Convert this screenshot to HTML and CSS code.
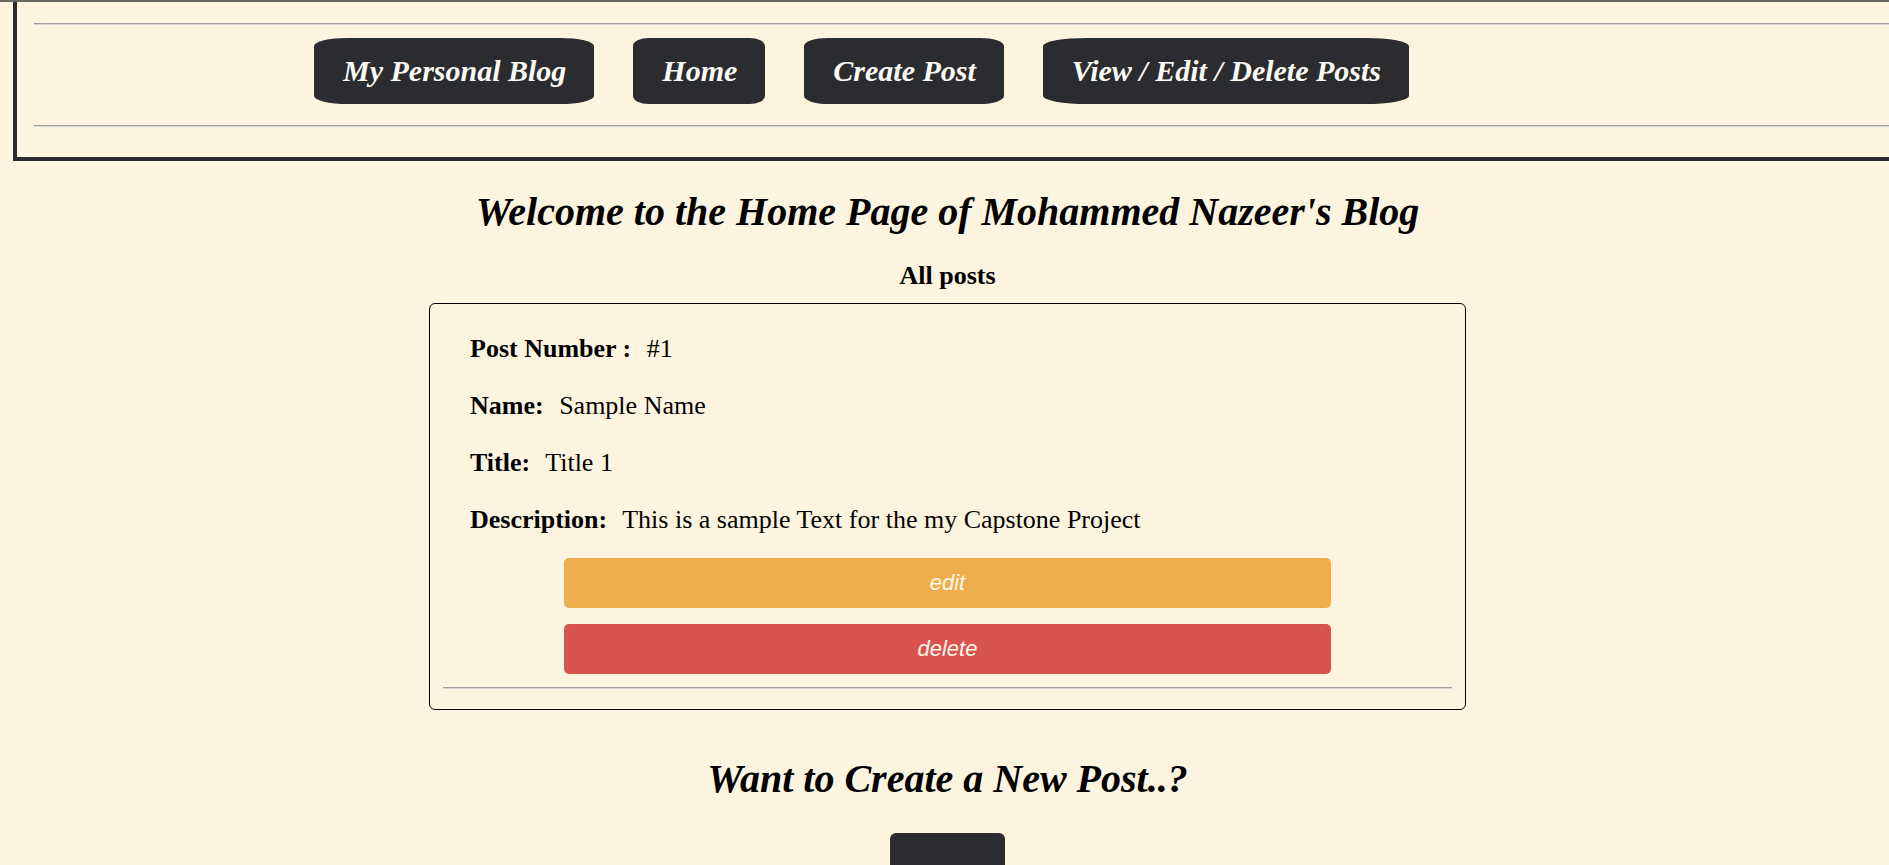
FILE: index.html
```html
<!DOCTYPE html>
<html lang="en">
<head>
<meta charset="utf-8">
<title>Mohammed Nazeer's Blog</title>
<link rel="stylesheet" href="styles.css">
</head>
<body>
<header class="site-header">
  <hr class="rule">
  <nav class="nav">
    <a class="nav-btn" href="#">My Personal Blog</a>
    <a class="nav-btn" href="#">Home</a>
    <a class="nav-btn" href="#">Create Post</a>
    <a class="nav-btn" href="#">View / Edit / Delete Posts</a>
  </nav>
  <hr class="rule">
</header>
<main class="main">
  <h1 class="page-title">Welcome to the Home Page of Mohammed Nazeer's Blog</h1>
  <h3 class="section-title">All posts</h3>
  <div class="card">
    <div class="post">
      <p class="row"><strong class="label">Post Number :</strong> #1</p>
      <p class="row"><strong class="label">Name:</strong> Sample Name</p>
      <p class="row"><strong class="label">Title:</strong> Title 1</p>
      <p class="row"><strong class="label">Description:</strong> This is a sample Text for the my Capstone Project</p>
    </div>
    <div class="actions">
      <button class="act act-edit" type="button">edit</button>
      <button class="act act-delete" type="button">delete</button>
    </div>
    <hr class="card-rule">
  </div>
  <h1 class="page-title cta-title">Want to Create a New Post..?</h1>
  <div class="cta">
    <a class="cta-btn" href="#">Create</a>
  </div>
</main>
</body>
</html>
```
FILE: styles.css
```css
html, body {
  margin: 0;
  padding: 0;
  background: #fdf4df;
  overflow: hidden;
}

body {
  font-family: "Liberation Serif", "Times New Roman", serif;
  color: #000;
  border-top: 2px solid #68685f;
}

.site-header {
  margin-left: 13px;
  border-left: 4px solid #2b2c2f;
  border-bottom: 4px solid #2b2c2f;
  padding: 21px 0 30px 17px;
}

.rule {
  margin: 0;
  border: 0;
  border-top: 1px solid #9c9c9c;
  border-bottom: 1px solid #d8d8d4;
  height: 0;
}

.nav {
  display: flex;
  gap: 39px;
  padding: 13px 0 21px 280px;
}

.nav-btn {
  display: block;
  background: #2b2c2f;
  color: #fdfaf5;
  font-weight: bold;
  font-style: italic;
  font-size: 30px;
  line-height: 34px;
  padding: 16px 28px 16px 29px;
  border-radius: 12%;
  text-decoration: none;
  white-space: nowrap;
}

.main {
  padding-left: 6px;
  display: flex;
  flex-direction: column;
  align-items: center;
}

.page-title {
  margin: 28px 0 0;
  font-size: 40px;
  line-height: 46px;
  font-weight: bold;
  font-style: italic;
  text-align: center;
}

.section-title {
  margin: 26px 0 0;
  font-size: 26px;
  line-height: 30px;
  font-weight: bold;
  text-align: center;
}

.card {
  margin-top: 12px;
  width: 1009px;
  border: 1px solid #000;
  border-radius: 6px;
  padding: 0 13px;
}

.post {
  display: flex;
  flex-direction: column;
  gap: 27px;
  padding: 30px 0 0 27px;
}

.row {
  margin: 0;
  font-size: 26px;
  line-height: 30px;
}

.label {
  margin-right: 9px;
}

.actions {
  margin-top: 23px;
  display: flex;
  flex-direction: column;
  align-items: center;
  gap: 16px;
}

.act {
  width: 767px;
  height: 50px;
  border: 0;
  border-radius: 5px;
  font-family: "Liberation Sans", Arial, sans-serif;
  font-style: italic;
  font-size: 22px;
  color: #fff8e6;
  cursor: pointer;
}

.act-edit {
  background: #f0ad4e;
}

.act-delete {
  background: #d9534f;
}

.card-rule {
  margin: 13px 0 20px;
  border: 0;
  border-top: 1px solid #9c9c9c;
  border-bottom: 1px solid #d8d8d4;
  height: 0;
}

.cta-title {
  margin-top: 46px;
}

.cta {
  margin-top: 31px;
}

.cta-btn {
  display: block;
  background: #2b2c2f;
  color: #fdfaf5;
  font-weight: bold;
  font-style: italic;
  font-size: 30px;
  line-height: 34px;
  padding: 40px 17px 16px;
  border-radius: 6px;
  text-decoration: none;
}
```
